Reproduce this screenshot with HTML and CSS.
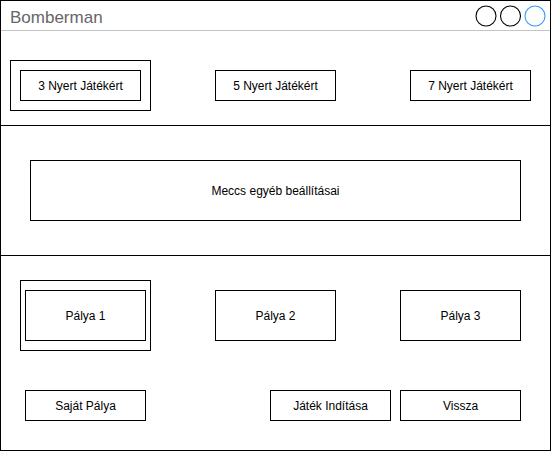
FILE: index.html
```html
<!DOCTYPE html>
<html lang="hu">
<head>
    <meta charset="UTF-8">
    <meta name="viewport" content="width=device-width, initial-scale=1.0">
    <title>Bomberman</title>
    <link rel="stylesheet" href="styles.css">
</head>
<body>
    <div class="window">
        <div class="titlebar">
            <span class="title">Bomberman</span>
            <svg class="window-buttons" width="75" height="22" viewBox="0 0 75 22">
                <circle cx="12" cy="11" r="10" fill="none" stroke="#000" stroke-width="1.1"/>
                <circle cx="36.5" cy="11" r="10" fill="none" stroke="#000" stroke-width="1.1"/>
                <circle cx="61" cy="11" r="10" fill="none" stroke="#3399ff" stroke-width="1.1"/>
            </svg>
        </div>

        <div class="section wins">
            <div class="selected">
                <div class="btn">3 Nyert Játékért</div>
            </div>
            <div class="btn wins-5">5 Nyert Játékért</div>
            <div class="btn wins-7">7 Nyert Játékért</div>
        </div>

        <div class="section options">
            <div class="btn options-btn">Meccs egyéb beállításai</div>
        </div>

        <div class="section maps">
            <div class="map-row">
                <div class="selected map-selected">
                    <div class="btn map">Pálya 1</div>
                </div>
                <div class="btn map map-2">Pálya 2</div>
                <div class="btn map map-3">Pálya 3</div>
            </div>
            <div class="action-row">
                <div class="btn own-map">Saját Pálya</div>
                <div class="btn start">Játék Indítása</div>
                <div class="btn back">Vissza</div>
            </div>
        </div>
    </div>
</body>
</html>
```

FILE: styles.css
```css
body {
    margin: 0;
    background-color: #fff;
    font-family: "Liberation Sans", Arial, sans-serif;
    color: #000;
}
.window {
    width: 551px;
    height: 451px;
    box-sizing: border-box;
    border: 1px solid #000;
    display: flex;
    flex-direction: column;
}
.titlebar {
    height: 30px;
    box-sizing: border-box;
    border-bottom: 1px solid #c4c4c4;
    display: flex;
    align-items: flex-start;
    padding-left: 9px;
}
.title {
    font-size: 17px;
    line-height: 19px;
    margin-top: 7px;
    color: #666;
}
.window-buttons {
    margin-left: auto;
    margin-top: 4px;
    margin-right: 1px;
}
.section {
    box-sizing: border-box;
    border-bottom: 1px solid #000;
}
.section:last-child {
    border-bottom: none;
    flex: 1;
}
.btn {
    box-sizing: border-box;
    width: 121px;
    height: 31px;
    border: 1px solid #000;
    display: flex;
    align-items: center;
    justify-content: center;
    font-size: 12px;
    white-space: nowrap;
}
.selected {
    border: 1px solid #000;
    padding: 9px;
}

/* gyozelmek szama */
.wins {
    height: 95px;
    display: flex;
    align-items: center;
    padding: 29px 0 0 9px;
    align-items: flex-start;
}
.wins .btn {
    margin-top: 10px;
}
.wins .selected .btn {
    margin-top: 0;
}
.wins-5 {
    margin-left: 64px;
}
.wins-7 {
    margin-left: 74px;
}

/* egyeb beallitasok */
.options {
    height: 130px;
    padding: 34px 0 0 29px;
}
.options-btn {
    width: 491px;
    height: 61px;
}

/* palyak */
.maps {
    padding: 24px 0 0 19px;
}
.map-row {
    display: flex;
    align-items: center;
}
.map-selected {
    padding: 9px 4px;
}
.map {
    height: 51px;
}
.map-2,
.map-3 {
    margin-left: 64px;
}
.action-row {
    display: flex;
    margin-top: 39px;
    padding-left: 5px;
}
.start {
    margin-left: 124px;
}
.back {
    margin-left: 9px;
}
```
